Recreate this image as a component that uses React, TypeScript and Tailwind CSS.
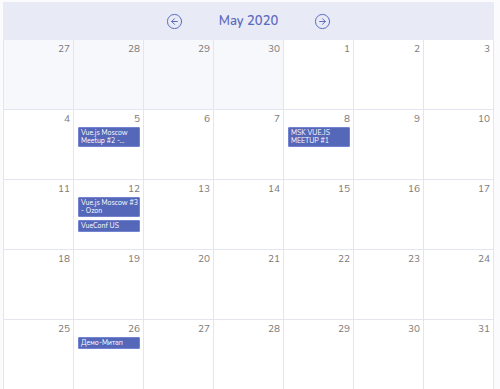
import { CircleArrowLeft, CircleArrowRight } from "lucide-react";

type CalEvent = { lines: string[] };

type Day = {
  n: number;
  outside?: boolean;
  events?: CalEvent[];
};

const WEEKS: Day[][] = [
  [
    { n: 27, outside: true },
    { n: 28, outside: true },
    { n: 29, outside: true },
    { n: 30, outside: true },
    { n: 1 },
    { n: 2 },
    { n: 3 },
  ],
  [
    { n: 4 },
    { n: 5, events: [{ lines: ["Vue.js Moscow", "Meetup #2 -..."] }] },
    { n: 6 },
    { n: 7 },
    { n: 8, events: [{ lines: ["MSK VUE.JS", "MEETUP #1"] }] },
    { n: 9 },
    { n: 10 },
  ],
  [
    { n: 11 },
    {
      n: 12,
      events: [
        { lines: ["Vue.js Moscow #3", "- Ozon"] },
        { lines: ["VueConf US"] },
      ],
    },
    { n: 13 },
    { n: 14 },
    { n: 15 },
    { n: 16 },
    { n: 17 },
  ],
  [18, 19, 20, 21, 22, 23, 24].map((n) => ({ n })),
  [
    { n: 25 },
    { n: 26, events: [{ lines: ["Демо-Митап"] }] },
    { n: 27 },
    { n: 28 },
    { n: 29 },
    { n: 30 },
    { n: 31 },
  ],
];

function EventChip({ ev }: { ev: CalEvent }) {
  return (
    <div className="rounded-[1px] border border-[#7383cf] bg-[#5567b9] px-[2px] py-[0.5px] text-[7px] leading-[8.5px] text-white">
      {ev.lines.map((l) => (
        <div key={l} className="whitespace-nowrap">
          {l}
        </div>
      ))}
    </div>
  );
}

export default function App() {
  return (
    <div
      className="h-[389px] w-[500px] overflow-hidden bg-[#fbfbfd] pl-[3px] pt-[2px]"
      style={{ fontFamily: "Nunito, Lato, sans-serif" }}
    >
      <div className="w-[491px]">
        {/* month header */}
        <div className="flex h-[38px] items-center justify-center gap-[36px] bg-[#e8eaf6] text-[#5c6bc0]">
          <CircleArrowLeft size={17} strokeWidth={1.4} />
          <span className="text-[13px] font-semibold leading-none">May 2020</span>
          <CircleArrowRight size={17} strokeWidth={1.4} />
        </div>

        {/* days */}
        <div className="border-l border-[#e3e5f1]">
          {WEEKS.map((week, wi) => (
            <div key={wi} className="grid h-[70px] grid-cols-[repeat(7,70px)]">
              {week.map((d, di) => (
                <div
                  key={di}
                  className={
                    "flex flex-col border-r border-b border-[#e3e5f1] pl-[4px] pr-[3px] pt-[3px] " +
                    (d.outside ? "bg-[#f7f8fc]" : "bg-white")
                  }
                >
                  <div className="text-right text-[10px] leading-[12px] text-[#7a7a7a]">
                    {d.n}
                  </div>
                  {d.events && (
                    <div className="mt-[2px] flex flex-col gap-[3px]">
                      {d.events.map((ev, ei) => (
                        <EventChip key={ei} ev={ev} />
                      ))}
                    </div>
                  )}
                </div>
              ))}
            </div>
          ))}
        </div>
      </div>
    </div>
  );
}
